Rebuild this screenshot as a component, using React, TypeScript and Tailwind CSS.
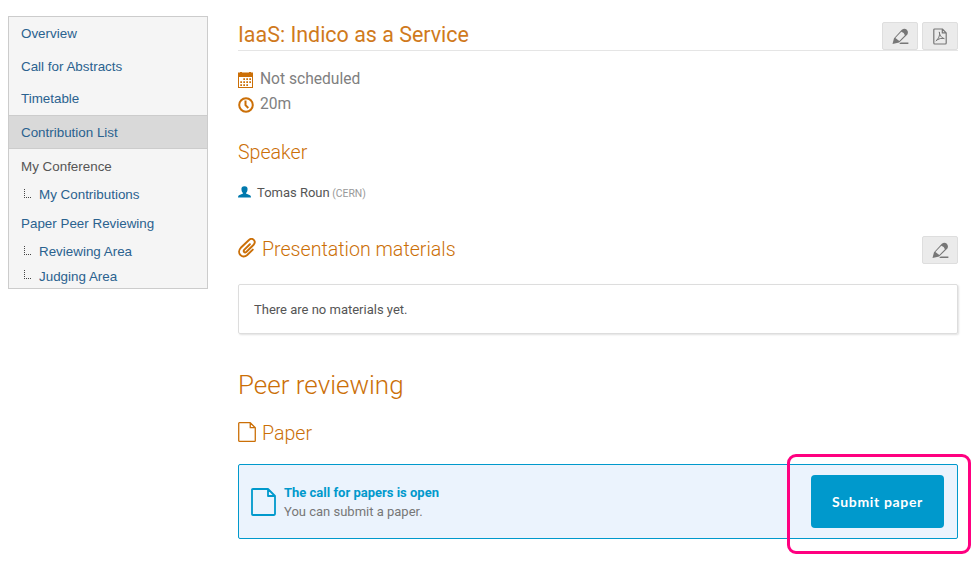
import React from "react";

function Branch() {
  return (
    <svg className="mr-[8px] h-[9px] w-[7px] shrink-0 -translate-y-[2px]" viewBox="0 0 7 9" fill="none" stroke="#444" shapeRendering="crispEdges">
      <path d="M0.5 0V9" strokeDasharray="1 1" />
      <path d="M0 8.5H7" strokeDasharray="1 1" />
    </svg>
  );
}

function Pencil() {
  return (
    <svg className="h-[17px] w-[17px]" viewBox="0 0 17 17" fill="#777">
      <path fillRule="evenodd" d="M0.5 16.1 2 10.2 9.8 1.8Q12.2 0.1 14.6 1.5 16.8 3.7 15.4 6.4L7.2 14.5ZM3.4 10 7.3 13 12.9 7.2Q12.3 4.4 9.3 3.7Z" />
      <path d="M8.6 14.4H16.4V16H7.2Z" />
    </svg>
  );
}

function Pdf() {
  return (
    <svg className="h-[17px] w-[14px]" viewBox="0 0 14 17" fill="none" stroke="#777">
      <path strokeWidth="1.2" strokeLinejoin="round" d="M1.6 1H9.3L13.2 4.9V15.1Q13.2 16 12.3 16H1.7Q.8 16 .8 15.1V1.9Q.8 1 1.6 1ZM9.3 1V4.9H13.2" />
      <path d="M6.2 3.8C6.4 6.8 8 9.6 11.3 10.8M6.5 4.2C7.2 7.5 5.4 11 2.8 13.2M3.4 12.2Q7 9.8 11.3 10.4" />
    </svg>
  );
}

function Page({ className, stroke }: { className: string; stroke: number }) {
  return (
    <svg className={className} viewBox="0 0 25 28" fill="none" stroke="currentColor" strokeWidth={stroke} strokeLinejoin="round" preserveAspectRatio="none">
      <path d="M1.9 1H17L24 8V26.1Q24 27 23.1 27H1.9Q1 27 1 26.1V1.9Q1 1 1.9 1ZM17 1V8H24" />
    </svg>
  );
}

function ToolButton({ children }: { children: React.ReactNode }) {
  return (
    <button className="flex h-[28px] w-[36px] items-center justify-center rounded-[2px] border border-[#dedede] bg-[#ebebeb] pt-px">
      {children}
    </button>
  );
}

export default function App() {
  return (
    <div className="relative flex h-[569px] w-[979px] overflow-hidden bg-white pl-2 pt-4 font-['Roboto',sans-serif]">
      <nav className="flex h-[273px] w-[200px] shrink-0 flex-col border border-[#ccc] bg-[#f5f5f5] font-['Liberation_Sans',sans-serif] text-[13.4px] leading-4 text-[#2a628f]">
        <a className="flex h-[33px] items-center pl-3">Overview</a>
        <a className="flex h-[33px] items-center pl-3">Call for Abstracts</a>
        <a className="flex h-[32px] items-center pl-3">Timetable</a>
        <a className="flex h-[34px] items-center border-y border-[#ccc] bg-[#d9d9d9] pl-3 pt-px">Contribution List</a>
        <span className="flex h-[33px] items-center pl-3 pt-[2px] text-[#555]">My Conference</span>
        <a className="flex h-[26px] items-center pl-[15px]"><Branch />My Contributions</a>
        <a className="flex h-[32px] items-center pl-3">Paper Peer Reviewing</a>
        <a className="flex h-[24px] items-center pl-[15px]"><Branch />Reviewing Area</a>
        <a className="flex h-[24px] items-center pl-[15px] pt-px"><Branch />Judging Area</a>
      </nav>

      <main className="ml-[30px] w-[720px] text-[#cb6f07]">
        <header className="flex h-[35px] items-end justify-between border-b border-[#e5e5e5]">
          <h1 className="pb-px text-[21.45px] font-normal leading-7 text-[#d07a1c]">IaaS: Indico as a Service</h1>
          <div className="flex gap-1">
            <ToolButton><Pencil /></ToolButton>
            <ToolButton><Pdf /></ToolButton>
          </div>
        </header>

        <div className="mt-[15px] flex h-[25px] items-center text-[15.6px] text-[#808080]">
          <svg className="mt-[3px] mr-[7px] h-[16px] w-[15px]" viewBox="0 0 15 16" fill="#cb6f07">
            <path fillRule="evenodd" d="M0 .5H2V0H4V.5H11V0H13V.5H15V16H0ZM1 5V15H14V5Z" />
            <path d="M5.3 6.3h1.7v1.7H5.3zM8.3 6.3h1.7v1.7H8.3zM11.3 6.3H13v1.7h-1.7zM2.3 9.3H4V11H2.3zM5.3 9.3H7V11H5.3zM8.3 9.3H10V11H8.3zM11.3 9.3H13V11h-1.7zM2.3 12.3H4V14H2.3zM5.3 12.3H7V14H5.3zM8.3 12.3H10V14H8.3z" />
          </svg>
          <span className="translate-y-px">Not scheduled</span>
        </div>
        <div className="flex h-[25px] items-center text-[15.6px] text-[#808080]">
          <svg className="mt-[3px] mr-[6px] h-[16px] w-[16px]" viewBox="0 0 16 16" fill="none" stroke="#cb6f07" strokeWidth="2">
            <circle cx="8" cy="8" r="6.8" />
            <path d="M7.5 3.5V8.2L10.3 11" />
          </svg>
          <span className="translate-y-px">20m</span>
        </div>

        <h2 className="mt-[22px] translate-y-px text-[19.6px] font-light leading-[28px]">Speaker</h2>
        <div className="mt-[17px] flex h-[20px] items-center text-[13px] text-[#555]">
          <svg className="mr-[6px] h-[12px] w-[13px] -translate-y-px" viewBox="0 0 13 12" fill="#0079ad">
            <path d="M6.5.2C9 .2 9.9 1.8 9.5 4 9.3 5.6 8.6 6.5 8 7V7.6L12 9.2Q13 9.8 13 11.5H0Q0 9.8 1 9.2L5 7.6V7C4.4 6.5 3.7 5.6 3.5 4 3.1 1.8 4 .2 6.5.2Z" />
          </svg>
          <span>Tomas Roun</span>
          <span className="ml-[2.5px] pt-px text-[10.4px] text-[#999]">(CERN)</span>
        </div>

        <div className="mt-[33px] flex h-[28px] items-center justify-between">
          <h2 className="flex items-center text-[19.6px] font-light leading-[28px]">
            <svg className="mr-[6px] h-[20px] w-[18px] -translate-y-[2px]" viewBox="0 0 18 20" fill="none" stroke="currentColor" strokeWidth="1.9" strokeLinecap="round" strokeLinejoin="round">
              <path d="M11.9 6.2 6.4 11.6C4.7 13.4 6.6 15.4 8.5 13.7L15.4 7C18.9 3.2 14.4-1.2 10.7 2.2L2.8 9.8C-1.8 14.5 3.9 21.6 9.2 17L14.8 11.6" />
            </svg>
            <span>Presentation materials</span>
          </h2>
          <ToolButton><Pencil /></ToolButton>
        </div>

        <div className="mt-[20px] flex h-[50px] items-center rounded-[2px] border border-[#ddd] pl-[15px] pt-[2px] text-[13px] text-[#555] shadow-[1px_1px_2px_rgba(0,0,0,0.12)]">
          There are no materials yet.
        </div>

        <h1 className="mt-[33px] text-[26px] font-light leading-[36px]">Peer reviewing</h1>
        <h2 className="mt-[16px] flex items-center text-[19.6px] font-light leading-[28px]">
          <Page className="mr-[6px] h-[20px] w-[18px] -translate-y-px" stroke={1.8} />
          <span className="translate-y-px">Paper</span>
        </h2>

        <section className="mt-[17px] flex h-[75px] items-center rounded-[2px] border border-[#0099cc] bg-[#ebf3fd] pl-3 pr-[13px] text-[13px] text-[#777]">
          <Page className="mr-[8px] h-[28px] w-[25px] text-[#0099cc]" stroke={1.8} />
          <div className="leading-[19px]">
            <div className="font-bold text-[#0099cc]">The call for papers is open</div>
            <div>You can submit a paper.</div>
          </div>
          <button className="ml-auto h-[53px] w-[133px] rounded-[4px] bg-[#0099cc] font-['Lato',sans-serif] text-[14px] font-bold tracking-[0.65px] text-white">
            Submit paper
          </button>
        </section>
      </main>

      <div className="pointer-events-none absolute left-[787px] top-[454px] h-[100px] w-[184px] rounded-[9px] border-[3px] border-[#ff0080]" />
    </div>
  );
}
